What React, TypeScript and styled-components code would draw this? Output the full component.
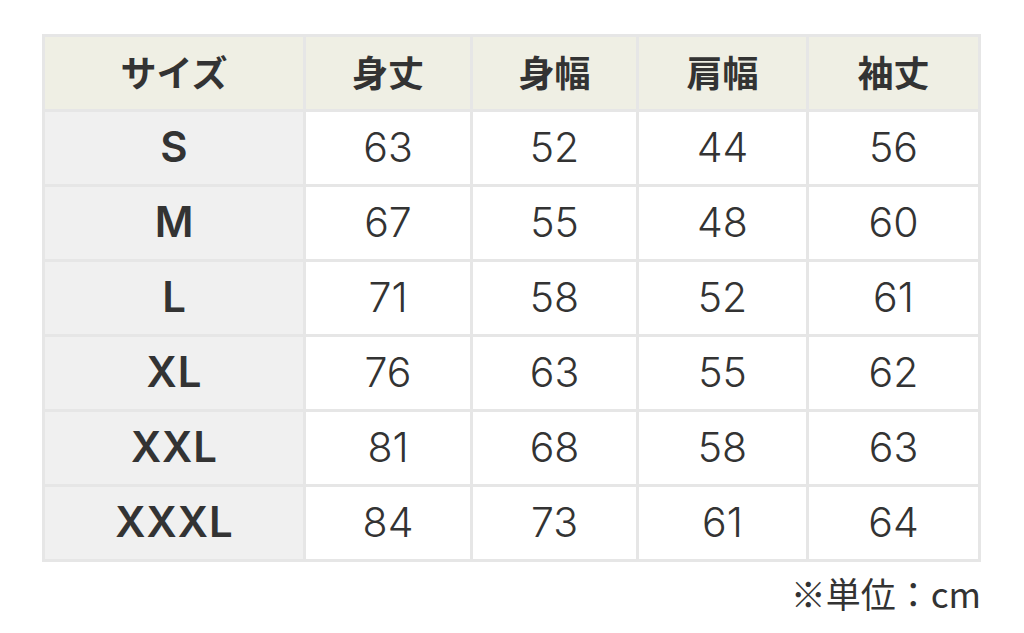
import React from "react";
import styled, { createGlobalStyle } from "styled-components";

const Global = createGlobalStyle`
  html, body { margin: 0; padding: 0; background: #ffffff; }
  body { font-family: "Noto Sans CJK JP", "Noto Sans", sans-serif; color: #333333; }
`;

const Page = styled.div`
  width: 1024px;
  height: 633px;
  box-sizing: border-box;
  padding: 34px 43px 0 42px;
  display: flex;
  flex-direction: column;
`;

const Grid = styled.div`
  display: grid;
  grid-template-columns: 258px 164px 163px 167px 169px;
  grid-auto-rows: 72px;
  gap: 3px;
  padding: 3px;
  background: #e6e6e6;
  width: fit-content;
`;

const Cell = styled.div<{ $kind: "head" | "size" | "value" }>`
  display: flex;
  align-items: center;
  justify-content: center;
  box-sizing: border-box;
  padding-bottom: ${(p) => (p.$kind === "head" ? "5px" : "2px")};
  padding-left: ${(p) => (p.$kind === "size" ? "1px" : "0")};
  background: ${(p) => (p.$kind === "head" ? "#efefe4" : p.$kind === "size" ? "#f0f0f0" : "#ffffff")};
  font-family: ${(p) =>
    p.$kind === "head" ? `"Noto Sans CJK JP", sans-serif` : `Inter, "Noto Sans", sans-serif`};
  font-weight: ${(p) => (p.$kind === "value" ? 300 : p.$kind === "size" ? 600 : 700)};
  font-size: ${(p) => (p.$kind === "head" ? "36px" : p.$kind === "size" ? "42px" : "41px")};
  letter-spacing: ${(p) => (p.$kind === "size" ? "1px" : "0")};
  color: #333333;
  line-height: 1;
`;

const Note = styled.div`
  align-self: flex-end;
  margin-top: 13px;
  font-family: "Noto Sans CJK JP", sans-serif;
  font-size: 35px;
  line-height: 1;
  color: #333333;
`;

const heads = ["サイズ", "身丈", "身幅", "肩幅", "袖丈"];
const rows: [string, number, number, number, number][] = [
  ["S", 63, 52, 44, 56],
  ["M", 67, 55, 48, 60],
  ["L", 71, 58, 52, 61],
  ["XL", 76, 63, 55, 62],
  ["XXL", 81, 68, 58, 63],
  ["XXXL", 84, 73, 61, 64],
];

export default function App() {
  return (
    <>
      <Global />
      <Page>
        <Grid>
          {heads.map((h) => (
            <Cell key={h} $kind="head">{h}</Cell>
          ))}
          {rows.map((r) => (
            <React.Fragment key={r[0]}>
              <Cell $kind="size">{r[0]}</Cell>
              {r.slice(1).map((v, i) => (
                <Cell key={i} $kind="value">{v}</Cell>
              ))}
            </React.Fragment>
          ))}
        </Grid>
        <Note>※単位：cm</Note>
      </Page>
    </>
  );
}
